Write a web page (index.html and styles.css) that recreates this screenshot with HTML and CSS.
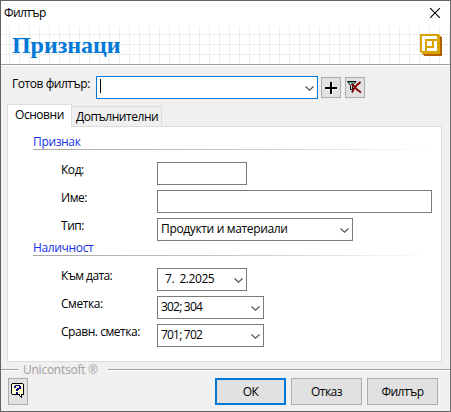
FILE: index.html
```html
<!DOCTYPE html>
<html lang="bg">
<head>
<meta charset="utf-8">
<title>Филтър</title>
<link rel="stylesheet" href="styles.css">
</head>
<body>
<div class="dialog">
  <header class="titlebar">
    <span>Филтър</span>
    <svg class="close" width="10" height="10" viewBox="0 0 10 10"><path d="M0 0L10 10M10 0L0 10"/></svg>
  </header>
  <div class="banner">
    <h1>Признаци</h1>
    <svg class="logo" width="22" height="22" viewBox="0 0 22 22" shape-rendering="crispEdges">
      <path fill="#b35f00" d="M3 2H21V3H22V22H4V21H3Z"/>
      <path fill="#d9a300" d="M0 0H19V1H20V20H2V19H1V18H0Z"/>
      <path fill="#fff" d="M2 2H17V5H5V17H2ZM7 7H12V12H7ZM14 7H17V17H7V14H14Z"/>
    </svg>
  </div>
  <div class="preset">
    <label class="preset-label">Готов филтър:</label>
    <div class="combo focused"><i class="caret"></i><svg class="chev" width="9" height="5" viewBox="0 0 9 5"><path d="M.5 .5L4.5 4.2L8.500 .5"/></svg></div>
    <button class="tool"><svg width="18" height="19" viewBox="0 0 18 19" shape-rendering="crispEdges"><path fill="#fff" d="M9 5H11V10H16V12H11V17H9V12H4V10H9Z"/><path d="M8 4H10V9H15V11H10V16H8V11H3V9H8Z"/></svg></button>
    <button class="tool"><svg width="18" height="19" viewBox="0 0 18 19">
      <path fill="#ddd" stroke="#000" d="M1.500 3.500H10L6.500 7.500V11.500H4.500V7.500Z"/><path stroke="#30b0b0" d="M3 4.500H8"/>
      <path fill="none" stroke="#800000" stroke-width="1.8" d="M5.500 5.500L8 8L11 11.500L15 14.500M14.500 4L11 7L8 10.500L6 14.500"/></svg></button>
  </div>
  <div class="tabs">
    <div class="tab active">Основни</div>
    <div class="tab">Допълнителни</div>
  </div>
  <main class="panel">
    <h2 class="section">Признак</h2>
    <div class="rows">
      <div class="row"><label>Код:</label><div class="field w90"></div></div>
      <div class="row"><label>Име:</label><div class="field w275"></div></div>
      <div class="row"><label>Тип:</label><div class="field w196"><span class="type">Продукти и материали</span><svg class="chev" width="9" height="5" viewBox="0 0 9 5"><path d="M.5 .5L4.5 4.2L8.500 .5"/></svg></div></div>
    </div>
    <h2 class="section second">Наличност</h2>
    <div class="rows">
      <div class="row"><label class="date-label">Към дата:</label><div class="field w90 date"><span>7.&nbsp; 2.2025</span><svg class="chev" width="9" height="5" viewBox="0 0 9 5"><path d="M.5 .5L4.5 4.2L8.500 .5"/></svg></div></div>
      <div class="row"><label>Сметка:</label><div class="field w107"><span class="accounts">302; 304</span><svg class="chev" width="9" height="5" viewBox="0 0 9 5"><path d="M.5 .5L4.5 4.2L8.500 .5"/></svg></div></div>
      <div class="row"><label class="compare-label">Сравн. сметка:</label><div class="field w107"><span class="accounts">701; 702</span><svg class="chev" width="9" height="5" viewBox="0 0 9 5"><path d="M.5 .5L4.5 4.2L8.500 .5"/></svg></div></div>
    </div>
  </main>
  <div class="brand"><span>Unicontsoft ®</span></div>
  <footer class="footer">
    <button class="help"><svg width="14" height="16" viewBox="0 0 14 16" shape-rendering="crispEdges">
      <path fill="#000" d="M1 0H12V1H13V12H11V15H10V14H9V13H8V12H1V11H0V1H1Z"/>
      <path fill="#ffffcf" d="M1 1H12V11H10V13H9V11H1Z"/>
      <path fill="#000080" d="M4 2H9V3H10V6H8V7H7V8H5V6H6V5H8V3H5V5H3V3H4ZM5 9H7V11H5Z"/></svg></button>
    <button class="btn primary">ОК</button>
    <button class="btn">Отказ</button>
    <button class="btn">Филтър</button>
  </footer>
</div>
</body>
</html>
```
FILE: styles.css
```css
* { box-sizing: border-box; }
body { margin: 0; }
.dialog {
  width: 451px; height: 412px;
  border: 1px solid #646264; border-right-color: #707070;
  background: #f0f0f0; color: #000;
  font: 12px/16px "Open Sans", "Noto Sans", sans-serif;
  letter-spacing: -.45px;
  display: flex; flex-direction: column;
  overflow: hidden; white-space: nowrap;
}
.titlebar {
  height: 25px; flex: none; background: #fff;
  display: flex; justify-content: space-between;
  padding: 4px 10px 0 3px;
  letter-spacing: -.6px;
}
.close { margin-top: 3px; stroke: #000; stroke-width: 1.1; fill: none; }
.banner {
  height: 40px; flex: none;
  border-bottom: 1px solid #fff; box-shadow: inset 0 -1px #a0a0a0;
  background-color: #fff;
  background-image: linear-gradient(90deg, transparent 8px, #ededed 8px 9px, transparent 9px), linear-gradient(transparent 8px, #ededed 8px 9px, transparent 9px);
  background-size: 10px 10px;
  display: flex; justify-content: space-between;
  padding: 8px 8px 0 11px;
}
h1 { margin: -3px 0 0; font: bold 24px/28px "Liberation Serif", serif; color: #0078d7; letter-spacing: -.05px; }
.preset { height: 38px; flex: none; padding: 10px 0 0 11px; display: flex; }
.preset-label { width: 84px; }
.combo, .field {
  height: 23px; background: #fff; border: 1px solid #7a7a7a;
  display: flex; align-items: flex-start; justify-content: space-between;
  padding: 2px 3px 0 3px;
}
.combo { width: 222px; border-color: #0078d7; }
.caret { width: 1px; height: 14px; background: #000; }
.chev { fill: none; stroke: #505050; stroke-width: 1.1; margin: 7px 0 0 auto; }
button {
  font: inherit; letter-spacing: inherit; color: inherit; padding: 0;
  background: #e1e1e1; border: 1px solid #adadad;
}
.tool { width: 20px; height: 21px; margin: 1px 0 0 3px; }
.tool + .tool { margin-left: 4px; }
button svg { display: block; }
.tabs { height: 22px; flex: none; display: flex; align-items: flex-end; padding-left: 6px; }
.tab { height: 20px; width: 90px; border: 1px solid #dcdcdc; border-width: 1px 1px 0 0; padding: 2px 0 0 4px; }
.tab.active {
  height: 23px; width: 65px; margin-bottom: -1px; position: relative;
  background: #fff; border-left-width: 1px; padding: 2px 0 0 7px;
}
.panel {
  width: 435px; height: 236px; flex: none; margin-left: 6px;
  background: #fff; border: 1px solid #dcdcdc; padding: 7px 7px 0 25px;
}
.section {
  margin: 0; font: inherit; letter-spacing: -.35px; color: #1432e6; height: 16px;
  background: linear-gradient(90deg, #a8a8a8, #c8c8c8 50%, #fff) bottom / 100% 1px no-repeat;
}
.second { margin-top: -1px; }
.rows { padding: 12px 0 0 28px; display: flex; flex-direction: column; gap: 5px; }
.row { display: flex; height: 23px; }
.row label { width: 96px; }
.date-label { letter-spacing: -.6px; }
.type { letter-spacing: -.35px; }
.accounts { letter-spacing: -.8px; }
.w90 { width: 90px; }
.w107 { width: 107px; }
.w196 { width: 196px; }
.w275 { width: 275px; }
.date { padding-left: 7px; }
.brand {
  height: 16px; flex: none; display: flex; color: #a0a0a0; letter-spacing: -.25px;
}
.brand { letter-spacing: 0; }
.brand::before, .brand::after { content: ""; height: 2px; margin-top: 7px; background: linear-gradient(#a0a0a0 50%, #fff 50%); }
.brand::before { width: 17px; }
.brand::after { flex: 1; }
.brand span { width: 90px; padding-left: 5px; letter-spacing: -.25px; }
.footer { display: flex; padding: 0 0 0 7px; gap: 5px; }
.help { width: 20px; height: 27px; margin-right: 182px; padding: 0 0 1px 2px; }
.btn { width: 71px; height: 27px; letter-spacing: -.55px; }
.primary { border: 2px solid #0078d7; }
```
